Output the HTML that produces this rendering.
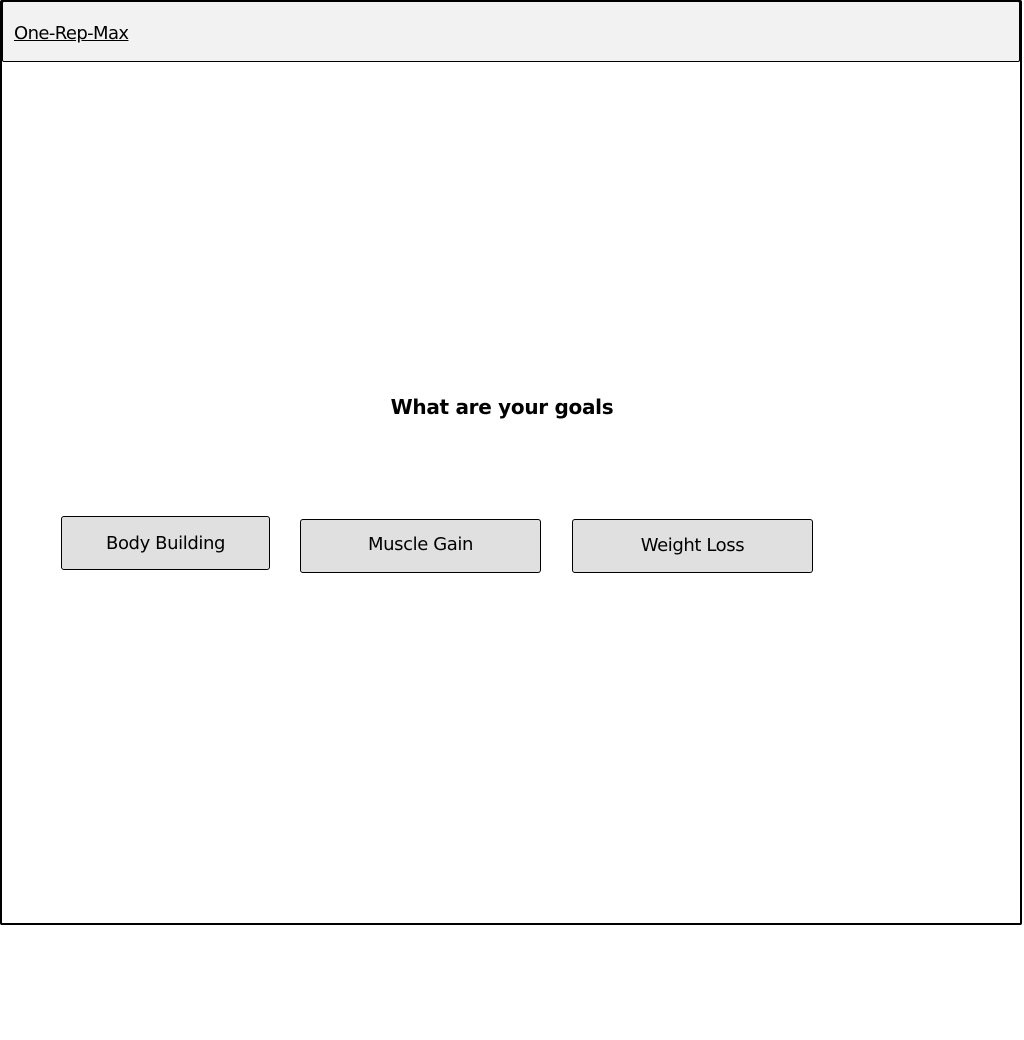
<!DOCTYPE html>
<html><head><style>
body{margin:0;width:1024px;height:1040px;background:#fff;position:relative;font-family:"Comic Sans MS","DejaVu Sans","Liberation Sans",sans-serif;color:#000;overflow:hidden}
.frame{position:absolute;left:0;top:0;width:1018px;height:921px;border:2px solid #000;border-radius:2px}
.hdr{position:absolute;left:2px;top:1px;width:1016px;height:59px;background:#f2f2f2;border:1.5px solid #000;border-radius:2px}
.hdr span{position:absolute;left:11px;top:21px;font-size:18px;text-decoration:underline;letter-spacing:-0.6px}
h1{position:absolute;left:0;width:1004px;top:395px;margin:0;text-align:center;font-size:20px;font-weight:bold;letter-spacing:-0.3px}
.b{position:absolute;background:#e0e0e0;border:1.5px solid #000;border-radius:3px;box-sizing:border-box;text-align:center;font-size:18px;letter-spacing:-0.4px}
</style></head><body>
<div class="frame"></div>
<div class="hdr"><span>One-Rep-Max</span></div>
<h1>What are your goals</h1>
<div class="b" style="left:61px;top:516px;width:209px;height:54px;line-height:54px">Body Building</div>
<div class="b" style="left:300px;top:519px;width:241px;height:54px;line-height:49px">Muscle Gain</div>
<div class="b" style="left:572px;top:519px;width:241px;height:54px;line-height:51px">Weight Loss</div>
</body></html>
